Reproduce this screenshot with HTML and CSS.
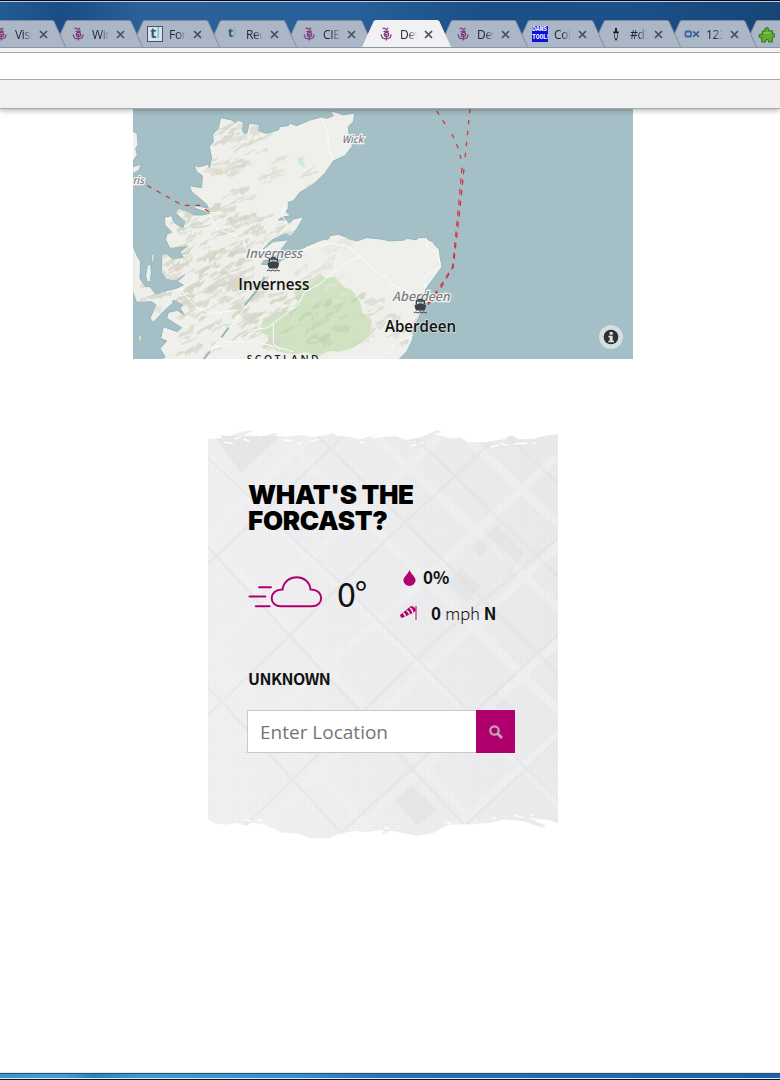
FILE: index.html
```html
<!DOCTYPE html>
<html lang="en">
<head>
<meta charset="utf-8">
<title>What's the forecast</title>
<link rel="stylesheet" href="styles.css">
</head>
<body>
<svg class="defs" width="0" height="0">
  <symbol id="thistle" viewBox="0 0 12 14">
    <g fill="none" stroke="#7d3b7c" stroke-width="1.2">
      <path d="M2.500 1.300h2.500l1.500 1.500M8 .8L6.500 3.300M3.500 4.300h4.500L7 5.500"/>
      <circle cx="6.500" cy="7.500" r="2.200"/>
      <path d="M1 7.500l1.500 3.500 3 .8M11.300 7.500l-1.300 3.300L6.500 12M6.300 7v6.500M4.500 7.500h3"/>
    </g>
  </symbol>
  <symbol id="close" viewBox="0 0 9 9"><path d="M1 1l7 7M8 1L1 8" stroke="#46505c" stroke-width="1.700" fill="none"/></symbol>
  <symbol id="tabshape" viewBox="0 0 89 28">
    <path d="M0 28L12 1.500Q12.500 .5 14 .5H75Q76.500 .5 77 1.500L89 28Z"/>
  </symbol>
  <symbol id="ferry" viewBox="0 0 14 16">
    <path d="M3 6V2.500h8V6M5.500 2V.8h3V2" fill="none" stroke="#3e4145" stroke-width="1.300"/>
    <path d="M1.300 6.500L7 4.800l5.700 1.700-.3 3L11 12H3L1.600 9.500Z" fill="#3e4145"/>
    <path d="M.5 14.500l2-1 2 1 2-1 2 1 2-1 2 1 1-.6" fill="none" stroke="#3e4145" stroke-width="1"/>
  </symbol>
</svg>

<header class="browser">
  <div class="tabs">
    <div class="tab"><svg class="shape"><use href="#tabshape"/></svg><svg class="fav"><use href="#thistle"/></svg><span class="name">Visi</span><svg class="x"><use href="#close"/></svg></div>
    <div class="tab"><svg class="shape"><use href="#tabshape"/></svg><svg class="fav"><use href="#thistle"/></svg><span class="name">Win</span><svg class="x"><use href="#close"/></svg></div>
    <div class="tab"><svg class="shape"><use href="#tabshape"/></svg><span class="fav tl boxed"><b>t</b><i>l</i></span><span class="name">For</span><svg class="x"><use href="#close"/></svg></div>
    <div class="tab"><svg class="shape"><use href="#tabshape"/></svg><span class="fav tl small"><b>t</b><i>l</i></span><span class="name">Rec</span><svg class="x"><use href="#close"/></svg></div>
    <div class="tab"><svg class="shape"><use href="#tabshape"/></svg><svg class="fav"><use href="#thistle"/></svg><span class="name">CIE</span><svg class="x"><use href="#close"/></svg></div>
    <div class="tab active"><svg class="shape"><use href="#tabshape"/></svg><svg class="fav"><use href="#thistle"/></svg><span class="name">Dev</span><svg class="x"><use href="#close"/></svg></div>
    <div class="tab"><svg class="shape"><use href="#tabshape"/></svg><svg class="fav"><use href="#thistle"/></svg><span class="name">Dev</span><svg class="x"><use href="#close"/></svg></div>
    <div class="tab narrow"><svg class="shape"><use href="#tabshape"/></svg><span class="fav dans"><span>DANS</span><span>TOOLS</span></span><span class="name">Col</span><svg class="x"><use href="#close"/></svg></div>
    <div class="tab narrow"><svg class="shape"><use href="#tabshape"/></svg><svg class="fav" viewBox="0 0 12 16"><path d="M5 1h2v4h2v2H3V5h2Z" fill="#111"/><path d="M4.500 7v5L6 15l1.500-3V7" fill="#ccd2da" stroke="#222"/><path d="M5 13h2l-1 3Z" fill="#111"/></svg><span class="name">#d3</span><svg class="x"><use href="#close"/></svg></div>
    <div class="tab narrow"><svg class="shape"><use href="#tabshape"/></svg><svg class="fav ox" viewBox="0 0 16 14"><rect x="1.500" y="4.500" width="5.500" height="5" rx="1" fill="none" stroke="#3a6496" stroke-width="1.800"/><path d="M9 4.300l6 5.500M15 4.300L9 9.800" stroke="#3a6496" stroke-width="1.800"/></svg><span class="name">123</span><svg class="x"><use href="#close"/></svg></div>
    <div class="tab narrow"><svg class="shape"><use href="#tabshape"/></svg><svg class="fav puzzle" viewBox="0 0 16 16"><path d="M4 5h2.500C5 1 11 0 10 4.500h3.500V7C16 6 17 11 13.500 10.500V15H10c.5-3-3.500-3-3 0H3.500v-4C0 12 0 6.500 4 8Z" fill="#5fae2e" stroke="#33791b"/><path d="M5.500 6.500h6" stroke="#97d465"/></svg></div>
  </div>
  <div class="address"></div>
  <div class="bookmarks"></div>
</header>

<main class="page">
  <svg class="map" viewBox="0 0 500 250">
    <defs>
      <path id="coast" d="M272 38L305 45 318 54 322 45 340 52 337 75 345 88 352 82 357 55 388 58 385 78 410 85 445 75 450 65 475 62 480 55 500 62 540 45 575 36 592 40 610 32 600 18 620 22 640 30 675 24 670 50 655 65 660 110 668 122 645 152 610 168 585 205 550 238 510 262 490 288 475 292 475 310 468 320 482 332 455 337 445 345 470 345 478 355 490 342 522 335 500 372 480 395 470 385 430 400 400 432 430 410 476 404 455 432 430 460 400 468 395 478 440 480 455 465 490 450 530 423 575 405 595 402 600 392 625 388 645 395 655 403 680 408 710 398 752 402 780 408 825 405 830 400 858 404 867 398 890 397 895 405 908 410 916 422 928 434 932 468 936 485 915 515 890 548 880 575 862 600 872 625 850 670 848 705 830 740 800 770H88L105 755 90 730 110 708 92 700 100 665 142 680 155 668 110 640 115 622 142 616 165 632 150 610 160 600 130 585 128 595 100 620 70 652 60 640 78 600 65 590 20 592 8 560V420L20 450 32 470 30 520 45 545 60 545 78 568 100 560 135 552 160 540 142 530 165 508 135 528 108 522 95 500 95 450 110 447 130 462 160 457 150 440 172 424 120 430 107 405 110 388 125 382 105 360 103 337 125 332 132 352 158 370 165 350 137 325 145 310 175 320 190 330 215 330 240 325 190 308 200 302 235 310 230 298 185 260 178 242 215 248 217 212 200 200 192 180 205 186 235 178 238 190 245 160 238 125 250 110 248 88 265 70Z"/>
      <clipPath id="land"><use href="#coast"/></clipPath>
    </defs>
    <rect width="500" height="250" fill="#a5bfc6"/>
    <g transform="translate(-3 -4) scale(.33333)">
      <g fill="#eff0eb" stroke="#93b7bc" stroke-width="3">
        <path d="M5 75L22 88 24 120 17 130 22 150 8 170ZM8 185L33 178 28 195 8 206Z"/>
        <path d="M65 450l8-6-2 24-6 6ZM52 482l10-6 2 30-4 26-10-4-3-18Z"/>
        <path fill="#cce0bd" d="M24 695l14-10-4 24-8 2Z"/>
        <use href="#coast"/>
      </g>
      <path fill="#cfe3c2" d="M490 560L520 535 570 508 590 520 615 515 640 545 665 555 690 590 698 625 725 645 718 695 690 712 670 728 630 740 600 738 560 755 530 742 490 748 440 738 415 715 412 690 388 678 400 640 440 622 485 615 505 590Z"/>
      <g clip-path="url(#land)"><g id="hills"></g></g>
      <path fill="#cfe6e2" d="M503 160l22-6-6 16 8 12-6 6-16-14Z"/>
      <g fill="none" stroke="#fbfbf8" stroke-width="3">
        <path d="M575 40L590 75 598 130 608 168M465 295l-10 35 12 20 5 15-30 28-40 20M240 330l20 40 60 25 18 8 10 30M465 450l70-22 70-13 50 10 38 32 50 50M695 455l-40 14-50 36-40 35-42 22-20 40-70 50-20 16-60 10-60 42-50 8M430 655l0 60 20 20M405 510L350 600 300 670 250 730 225 770M150 553l50 55 50 18 60-10M110 560l50-10M890 405l2 20 28 20 12 30M932 485l-40 22-12 20 8 22M750 512l18 0 10 22 50 25 40 15M850 690l-50 25-50 45M280 710l100 0 110 30"/>
      </g>
      <g fill="none" stroke="#95b9bd" stroke-width="6"><path d="M404 515L384 552 345 600M296 668l-22 30M240 740l-20 24"/></g>
      <g fill="none" stroke="#d42f35" stroke-width="3.600">
        <path stroke-dasharray="14 18" d="M24 226L40 235 150 297 165 301 208 301 240 322"/>
        <path stroke-dasharray="13 20" d="M920 18L955 72M966 88L984 128 996 172"/>
        <path stroke-dasharray="13 20" d="M1020 12L1004 170"/>
        <path stroke-dasharray="16 16" d="M996 188L985 310 968 485 930 545 890 600"/>
        <path stroke-dasharray="16 16" d="M1002 192L990 310 970 485 932 550 892 602"/>
      </g>
      <g class="place">
        <text x="636" y="115" font-size="31" textLength="63" lengthAdjust="spacingAndGlyphs">Wick</text>
        <text x="8" y="238" font-size="31" textLength="33" lengthAdjust="spacingAndGlyphs">ris</text>
        <text x="346" y="460" font-size="38" textLength="170" lengthAdjust="spacingAndGlyphs">Inverness</text>
        <text x="787" y="587" font-size="38" textLength="172" lengthAdjust="spacingAndGlyphs">Aberdeen</text>
      </g>
      <use href="#ferry" x="409" y="454" width="42" height="49"/>
      <use href="#ferry" x="850" y="580" width="42" height="49"/>
      <g class="port">
        <text x="325" y="555" textLength="213" lengthAdjust="spacingAndGlyphs">Inverness</text>
        <text x="765" y="680" textLength="213" lengthAdjust="spacingAndGlyphs">Aberdeen</text>
      </g>
      <text class="country" x="350" y="774" textLength="216">SCOTLAND</text>
      <circle cx="1443" cy="696" r="36" fill="#d3dfe3"/>
      <circle cx="1443" cy="696" r="22" fill="#2f3031"/>
      <path d="M1439 681h9v8h-9ZM1435 692h13v15h4v5h-17v-5h4v-10h-4Z" fill="#dde5e8"/>
    </g>
  </svg>

  <section class="weather">
    <svg class="paper" viewBox="12 12 1050 1230">
      <defs>
        <clipPath id="torn"><path d="M12 40L30 38 55 36 48 28 75 30 105 18 150 12 125 26 112 32 140 28 165 32 200 24 225 20 212 30 250 32 290 27 330 34 385 22 400 30 440 34 470 40 520 24 495 38 545 32 575 30 605 42 650 34 700 12 712 18 690 26 715 30 740 38 770 34 790 48 820 50 860 46 900 40 922 27 945 40 990 38 1020 30 1062 24V1192L1035 1182 1000 1180 970 1172 995 1186 1025 1198 1015 1205 960 1186 900 1180 860 1190 800 1195 740 1195 715 1205 690 1220 640 1230 600 1222 560 1214 530 1228 540 1212 490 1218 450 1215 400 1225 370 1238 320 1238 280 1222 235 1220 180 1195 140 1190 130 1200 100 1192 60 1196 30 1192 12 1180Z"/></clipPath>
        <linearGradient id="shade" x1="0" y1=".6" x2="1" y2=".35"><stop offset="0" stop-color="#f0f0f2"/><stop offset=".5" stop-color="#ededef"/><stop offset="1" stop-color="#e9e9eb"/></linearGradient>
        <pattern id="weave" width="9" height="9" patternUnits="userSpaceOnUse"><path d="M1 0v9" stroke="#fff" stroke-width="2" opacity=".2"/><path d="M6 0v5M0 7h9" stroke="#cfcfd2" stroke-width="1.500" opacity=".18"/></pattern>
      </defs>
      <g clip-path="url(#torn)">
        <rect x="12" y="12" width="1050" height="1230" fill="url(#shade)"/>
        <g fill="#e2e3e4" opacity=".75">
          <path d="M30 30H230L110 140ZM800 365L880 300 960 380 920 440 865 350 830 395ZM730 470L770 425 830 480 790 530ZM840 840L875 795 935 850ZM560 1110L605 1060 700 1150 640 1200Z"/>
        </g>
        <g fill="none" stroke="#f3f3f5" stroke-width="25" opacity=".55">
          <path d="M0 340L320 30M0 690L720 20M10 1040L640 480 1060 90M120 1250L1070 350M420 1250L1070 640M700 1250L1070 920M-20 60L1080 1150M220 20L1080 870M500 20L1080 560M770 20L1080 310M0 330L860 1240M0 660L520 1240"/>
        </g>
        <g fill="none" stroke="#dcdcdf" stroke-width="8" opacity=".38">
          <path d="M0 425L420 30M0 880L560 330 860 50M80 1240L710 630 1070 330M390 1240L1070 620M740 1240L1070 930M0 85L440 500 1080 1140M330 20L1080 760M620 20L1080 470M900 20L1080 190M0 350L820 1240M0 770L430 1240"/>
        </g>
        <rect x="12" y="12" width="1050" height="1230" fill="url(#weave)"/>
      </g>
      <path d="M60 49l28 3M90 38l22-4M118 40l18 5M240 42l24 3M278 50l12 4M320 46l24-6M470 48l10 3M620 60l16-4M648 50l10 3M860 64l24-7M890 52l20 6M930 54l40-3M985 50l10 2M120 1180l20 6M160 1182l14 3M540 1205l18 3M722 1188l20 4M860 1175l18 2M930 1168l30 7M980 1165l10 4" stroke="#fff" stroke-width="4"/>
    </svg>
    <h2 class="title"><span class="t1">WHAT'S THE</span><span class="t2">FORCAST?</span></h2>
    <div class="now">
      <svg class="cloud" viewBox="133 446 226 106"><path d="M232 544H326C364 544 364 492 322 493 316 443 244 443 237 493 194 492 194 544 232 544Z" fill="none" stroke="#b0006e" stroke-width="6"/><path d="M166 486h36M137 514h48M156 544h42" stroke="#b0006e" stroke-width="6" stroke-linecap="round"/></svg>
      <span class="temp">0°</span>
      <div class="facts">
        <div class="fact"><svg class="drop" viewBox="0 0 12 15"><path d="M6 0C7.500 4 11.700 6.500 11.700 9.700a5.700 5.300 0 0 1-11.400 0C.3 6.500 4.500 4 6 0Z" fill="#b0006e"/></svg><b>0%</b></div>
        <div class="fact"><svg class="sock" viewBox="0 0 17 14"><path d="M0 9L11 0Q15 .5 16 4L14 6.500 2 12Q0 11 0 9Z" fill="#b0006e"/><path d="M3 7Q5 8 5.500 10.500M6.500 4.500Q9 5.500 9.500 8.500M10 2Q12 3 13 7" fill="none" stroke="#f0e4ec" stroke-width="1.500"/><path d="M16 0v14" stroke="#b0006e"/></svg><b>0</b><span class="unit">mph</span><b>N</b></div>
      </div>
    </div>
    <div class="where">UNKNOWN</div>
    <div class="search">
      <div class="field"><span>Enter Location</span></div>
      <div class="go"><svg viewBox="0 0 14 14"><circle cx="5.500" cy="5.500" r="4.200" fill="none" stroke="#c3a3b8" stroke-width="2.200"/><path d="M8.500 8.500L13 13" stroke="#c3a3b8" stroke-width="2.800"/></svg></div>
    </div>
  </section>
</main>
<footer class="frame"></footer>
<script src="hills.js"></script>
</body>
</html>
```
FILE: hills.js
```js
// Scatter terrain shading over the highlands, with a fixed seed.
(function () {
  var seed = 11;
  function rnd() { seed = (seed * 16807) % 2147483647; return seed / 2147483647; }
  var group = document.getElementById('hills');
  function patch(x, y, w, h, tilt, color, opacity) {
    var p = document.createElementNS('http://www.w3.org/2000/svg', 'path');
    var d = 'M' + x + ' ' + y;
    var n = 5, i;
    for (i = 1; i <= n; i++) d += 'L' + (x + w * i / n) + ' ' + (y - tilt * i / n - h * rnd() * 0.7);
    for (i = n; i >= 1; i--) d += 'L' + (x + w * i / n - 5) + ' ' + (y - tilt * i / n + h * rnd());
    p.setAttribute('d', d + 'Z');
    p.setAttribute('fill', color);
    p.setAttribute('opacity', opacity);
    group.appendChild(p);
  }
  function area(count, x0, y0, x1, y1, color) {
    for (var i = 0; i < count; i++) {
      var w = 22 + rnd() * 48;
      patch(x0 + rnd() * (x1 - x0), y0 + rnd() * (y1 - y0), w, 6 + rnd() * 14, w * (0.1 + rnd() * 0.55), color, 0.5 + rnd() * 0.45);
    }
  }
  area(26, 240, 60, 380, 200, '#d8d9cc');
  area(16, 190, 170, 330, 300, '#d8d9cc');
  area(8, 370, 130, 430, 260, '#dcddd1');
  area(105, 110, 310, 340, 560, '#d4d5c6');
  area(18, 300, 340, 440, 440, '#dadbcf');
  area(85, 130, 540, 430, 750, '#d6d7c9');
  area(14, 8, 450, 100, 620, '#d8d9cc');
  area(16, 450, 490, 620, 590, '#e0e1d7');
  area(14, 660, 580, 850, 740, '#dbdccf');
  area(26, 420, 590, 680, 735, '#c0d4ae');
  area(6, 500, 210, 575, 260, '#d8d9cc');
  area(8, 570, 415, 650, 480, '#e6e7df');
})();
```
FILE: styles.css
```css
* { box-sizing: border-box; }
body { margin: 0; width: 780px; height: 1080px; overflow: hidden; background: #fff; display: flex; flex-direction: column; }
.defs { position: absolute; }
.browser { flex: none; height: 109px; position: relative; z-index: 2; background: #f1f1f1; border-bottom: 1px solid #a9a9ab; box-shadow: 0 1px 6px rgba(0, 0, 0, .35); }
.tabs { height: 48px; display: flex; padding-top: 20px; overflow: hidden; border-top: 1px solid #030821; border-bottom: 1px solid #8b97a8; background: linear-gradient(#b9c9de 0 1px, transparent 1px), linear-gradient(90deg, #235b95 0, #1b4c84 8%, #2c6099 18%, #28609b 45%, #1b4f86 62%, #1c5088 80%, #174577 100%); }
.tab { position: relative; flex: none; width: 89px; height: 28px; margin-right: -12px; margin-top: -1px; display: flex; align-items: center; padding-left: 18px; }
.tab:first-child { margin-left: -23px; }
.tab:nth-child(1) { z-index: 9; }
.tab:nth-child(2) { z-index: 8; }
.tab:nth-child(3) { z-index: 7; }
.tab:nth-child(4) { z-index: 6; }
.tab:nth-child(5) { z-index: 5; }
.tab:nth-child(7) { z-index: 4; }
.tab:nth-child(8) { z-index: 3; }
.tab:nth-child(9) { z-index: 2; }
.tab:nth-child(10) { z-index: 1; }
.tab.active { z-index: 10; }
.narrow { margin-right: -13px; }
.shape { position: absolute; left: 0; top: 0; width: 89px; height: 28px; fill: #abb7c7; stroke: #7f8ea3; stroke-width: 1; }
.active .shape { fill: #f1f1f1; stroke: #f1f1f1; }
.tab .fav { position: relative; flex: none; width: 12px; height: 14px; }
.name { position: relative; width: 17px; margin-left: 8px; overflow: hidden; white-space: nowrap; font: 12px "Open Sans", sans-serif; letter-spacing: -.3px; color: #1d2530; -webkit-mask-image: linear-gradient(90deg, #000 50%, transparent); mask-image: linear-gradient(90deg, #000 50%, transparent); }
.x { position: relative; width: 9px; height: 9px; margin-left: 7px; }
.tab .tl { width: 16px; margin-left: -2px; margin-right: -2px; height: 16px; font: 14px/14px "Open Sans", sans-serif; text-align: center; color: #34566e; }
.tl i { font-style: normal; color: #76b3bd; }
.tab .small { font-size: 12px; }
.tab .boxed { border: 1px solid #3e5870; background: #d7e4ef; line-height: 12px; }
.tab .dans { width: 16px; height: 16px; margin: 0 -2px; background: #0a12dd; color: #fff; font: bold 6.5px/8px "Liberation Mono", monospace; letter-spacing: -.2px; overflow: hidden; display: flex; flex-direction: column; }
.tab .ox { width: 16px; margin: 0 -2px; }
.tab .puzzle { width: 17px; height: 17px; margin-left: -4px; }
.address { height: 28px; margin-top: 4px; border: solid #a9a9ab; border-width: 1px 0; background: #fff; }
.bookmarks { height: 28px; }

.page { flex: 1; }
.map { display: block; width: 500px; height: 250px; margin-left: 133px; }
.place { font-family: "Noto Sans CJK JP", sans-serif; font-style: italic; font-weight: 500; fill: #7c7e83; stroke: #f6f7f5; stroke-width: 7px; paint-order: stroke; }
.port { font: 600 47px "Open Sans", sans-serif; fill: #111; stroke: rgba(240, 241, 236, .6); stroke-width: 4px; paint-order: stroke; }
.country { font: 600 31px "Open Sans", sans-serif; fill: #222; }

.weather { position: relative; width: 350px; height: 410px; margin: 71px 0 0 208px; padding: 52px 0 0 40px; color: #111; font-family: "Noto Sans CJK JP", sans-serif; }
.paper { position: absolute; left: 0; top: 0; width: 350px; height: 410px; z-index: -1; }
.title { margin: 0; display: flex; flex-direction: column; font: 900 26px/26px Inter, sans-serif; color: #000; }
.t1 { letter-spacing: -.35px; }
.t2 { letter-spacing: -.3px; }
.now { display: flex; height: 90px; margin-top: 24px; }
.cloud { width: 75px; height: 35px; margin-top: 16px; }
.temp { width: 63px; padding-left: 14px; font-size: 34px; line-height: 70px; font-weight: 400; letter-spacing: -1px; }
.facts { padding-top: 6px; margin-left: 14px; font-size: 17px; }
.fact { display: flex; align-items: center; height: 24px; margin-bottom: 12px; }
.drop { width: 13px; height: 16px; margin: 4px 7px 0 3px; }
.sock { width: 17px; height: 14px; margin: 2px 14px 0 0; }
.unit { margin: 0 4px; font-weight: 300; letter-spacing: -.3px; }
.where { margin-top: 18px; font-size: 16px; letter-spacing: -.5px; font-weight: 700; line-height: 24px; height: 24px; }
.search { display: flex; margin-top: 20px; width: 268px; height: 43px; margin-left: -1px; }
.field { flex: 1; padding-left: 12px; border: 1px solid #c8c8ca; border-right: 0; background: #fff; color: #757575; font: 19px/42px "Open Sans", sans-serif; }
.go { width: 39px; background: #b0006e; display: flex; align-items: center; justify-content: center; }
.go svg { width: 14px; height: 14px; }
.frame { height: 8px; flex: none; background: linear-gradient(#eee9e4 0 1px, #1f5482 1px 2px, transparent 2px 6px, #dfe9f2 6px 7px, #07142a 7px), linear-gradient(90deg, #3a96cd, #4a9fd0 8%, #2a83b8 12%, #419ad2 18%, #3a8fce 38%, #2474b5 50%, #1c62a8); }
```
